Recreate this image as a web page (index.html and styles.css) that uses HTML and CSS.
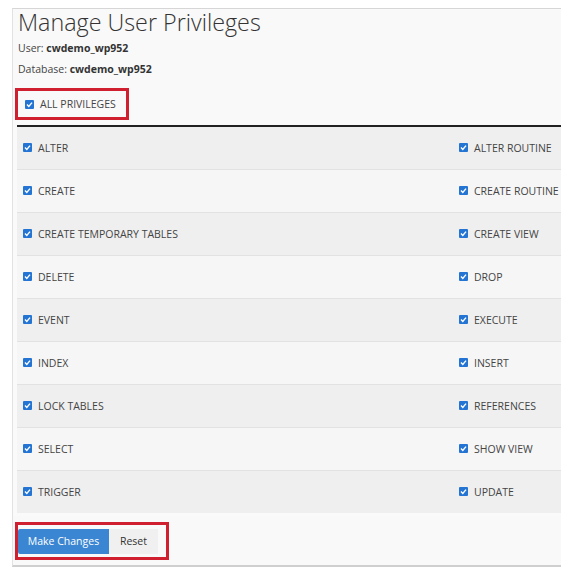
FILE: index.html
```html
<!DOCTYPE html>
<html>
<head>
<meta charset="utf-8">
<link rel="stylesheet" href="styles.css">
</head>
<body>
<div class="panel">
  <div class="head">
    <h1 class="title">Manage User Privileges</h1>
    <p class="meta">User: <b>cwdemo_wp952</b></p>
    <p class="meta">Database: <b>cwdemo_wp952</b></p>
    <div class="allbox">
      <span class="cb"><svg viewBox="0 0 9 9" width="9" height="9"><path d="M2 4.6 L3.8 6.4 L7 2.6" fill="none" stroke="#fff" stroke-width="1.4"/></svg></span>
      <span class="lbl">ALL PRIVILEGES</span>
    </div>
  </div>
  <div class="rows">
    <div class="row odd"><div class="cell"><span class="cb"><svg viewBox="0 0 9 9" width="9" height="9"><path d="M2 4.6 L3.8 6.4 L7 2.6" fill="none" stroke="#fff" stroke-width="1.4"/></svg></span>ALTER</div><div class="cell"><span class="cb"><svg viewBox="0 0 9 9" width="9" height="9"><path d="M2 4.6 L3.8 6.4 L7 2.6" fill="none" stroke="#fff" stroke-width="1.4"/></svg></span>ALTER ROUTINE</div></div>
    <div class="row even"><div class="cell"><span class="cb"><svg viewBox="0 0 9 9" width="9" height="9"><path d="M2 4.6 L3.8 6.4 L7 2.6" fill="none" stroke="#fff" stroke-width="1.4"/></svg></span>CREATE</div><div class="cell"><span class="cb"><svg viewBox="0 0 9 9" width="9" height="9"><path d="M2 4.6 L3.8 6.4 L7 2.6" fill="none" stroke="#fff" stroke-width="1.4"/></svg></span>CREATE ROUTINE</div></div>
    <div class="row odd"><div class="cell"><span class="cb"><svg viewBox="0 0 9 9" width="9" height="9"><path d="M2 4.6 L3.8 6.4 L7 2.6" fill="none" stroke="#fff" stroke-width="1.4"/></svg></span>CREATE TEMPORARY TABLES</div><div class="cell"><span class="cb"><svg viewBox="0 0 9 9" width="9" height="9"><path d="M2 4.6 L3.8 6.4 L7 2.6" fill="none" stroke="#fff" stroke-width="1.4"/></svg></span>CREATE VIEW</div></div>
    <div class="row even"><div class="cell"><span class="cb"><svg viewBox="0 0 9 9" width="9" height="9"><path d="M2 4.6 L3.8 6.4 L7 2.6" fill="none" stroke="#fff" stroke-width="1.4"/></svg></span>DELETE</div><div class="cell"><span class="cb"><svg viewBox="0 0 9 9" width="9" height="9"><path d="M2 4.6 L3.8 6.4 L7 2.6" fill="none" stroke="#fff" stroke-width="1.4"/></svg></span>DROP</div></div>
    <div class="row odd"><div class="cell"><span class="cb"><svg viewBox="0 0 9 9" width="9" height="9"><path d="M2 4.6 L3.8 6.4 L7 2.6" fill="none" stroke="#fff" stroke-width="1.4"/></svg></span>EVENT</div><div class="cell"><span class="cb"><svg viewBox="0 0 9 9" width="9" height="9"><path d="M2 4.6 L3.8 6.4 L7 2.6" fill="none" stroke="#fff" stroke-width="1.4"/></svg></span>EXECUTE</div></div>
    <div class="row even"><div class="cell"><span class="cb"><svg viewBox="0 0 9 9" width="9" height="9"><path d="M2 4.6 L3.8 6.4 L7 2.6" fill="none" stroke="#fff" stroke-width="1.4"/></svg></span>INDEX</div><div class="cell"><span class="cb"><svg viewBox="0 0 9 9" width="9" height="9"><path d="M2 4.6 L3.8 6.4 L7 2.6" fill="none" stroke="#fff" stroke-width="1.4"/></svg></span>INSERT</div></div>
    <div class="row odd"><div class="cell"><span class="cb"><svg viewBox="0 0 9 9" width="9" height="9"><path d="M2 4.6 L3.8 6.4 L7 2.6" fill="none" stroke="#fff" stroke-width="1.4"/></svg></span>LOCK TABLES</div><div class="cell"><span class="cb"><svg viewBox="0 0 9 9" width="9" height="9"><path d="M2 4.6 L3.8 6.4 L7 2.6" fill="none" stroke="#fff" stroke-width="1.4"/></svg></span>REFERENCES</div></div>
    <div class="row even"><div class="cell"><span class="cb"><svg viewBox="0 0 9 9" width="9" height="9"><path d="M2 4.6 L3.8 6.4 L7 2.6" fill="none" stroke="#fff" stroke-width="1.4"/></svg></span>SELECT</div><div class="cell"><span class="cb"><svg viewBox="0 0 9 9" width="9" height="9"><path d="M2 4.6 L3.8 6.4 L7 2.6" fill="none" stroke="#fff" stroke-width="1.4"/></svg></span>SHOW VIEW</div></div>
    <div class="row odd"><div class="cell"><span class="cb"><svg viewBox="0 0 9 9" width="9" height="9"><path d="M2 4.6 L3.8 6.4 L7 2.6" fill="none" stroke="#fff" stroke-width="1.4"/></svg></span>TRIGGER</div><div class="cell"><span class="cb"><svg viewBox="0 0 9 9" width="9" height="9"><path d="M2 4.6 L3.8 6.4 L7 2.6" fill="none" stroke="#fff" stroke-width="1.4"/></svg></span>UPDATE</div></div>
  </div>
  <div class="foot">
    <div class="btnbox">
      <button class="btn primary">Make Changes</button><button class="btn reset">Reset</button>
    </div>
  </div>
</div>
</body>
</html>
```

FILE: styles.css
```css
html, body {
  margin: 0;
  padding: 0;
  background: #ffffff;
  font-family: "Open Sans", "Liberation Sans", sans-serif;
  color: #333333;
}

.panel {
  margin: 8px 0 0 12px;
  width: 548px;
  background: #fafafa;
  border-top: 1px solid #d6d6d6;
  border-left: 1px solid #e2e2e2;
  border-bottom: 2px solid #cfcfcf;
  padding-top: 1px;
}

.head {
  padding-left: 5px;
  background: #f9f9f9;
}

.title {
  margin: 0;
  font-size: 23.3px;
  font-weight: 300;
  line-height: 24px;
  color: #333333;
}

.meta {
  margin: 4px 0 0 0;
  font-size: 10.5px;
  line-height: 21px;
  height: 21px;
  color: #444;
}

.meta + .meta {
  margin-top: 0;
}

.meta b {
  font-weight: 700;
  color: #333;
}

.allbox {
  display: inline-flex;
  align-items: center;
  box-sizing: border-box;
  height: 32px;
  width: 114px;
  margin: 8px 0 0 -3px;
  padding-left: 7px;
  border: 3px solid #d0202f;
  font-size: 10.5px;
  color: #444;
}

.cb {
  display: inline-flex;
  width: 9px;
  height: 9px;
  background: #2475d3;
  border-radius: 1px;
  margin-right: 6px;
  flex: none;
}

.cb svg {
  display: block;
}

.rows {
  margin: 5px 0 0 4px;
  border-top: 2px solid #222;
}

.row {
  display: grid;
  grid-template-columns: 436px 1fr;
  align-items: center;
  height: 41px;
  padding: 0 0 1px 6px;
  border-bottom: 1px solid #e2e2e2;
  font-size: 10.5px;
  color: #444;
}

.row:last-child {
  border-bottom: none;
}

.row.odd {
  background: #efefef;
}

.row.even {
  background: #f6f6f6;
}

.cell {
  display: flex;
  align-items: center;
  white-space: nowrap;
}

.foot {
  margin-top: 3px;
  padding: 6px 0 5px 2px;
  background: #f9f9f9;
}

.btnbox {
  display: inline-flex;
  align-items: center;
  box-sizing: border-box;
  width: 154px;
  height: 38px;
  border: 3px solid #d0202f;
  padding: 0;
}

.btn {
  font-family: "Open Sans", "Liberation Sans", sans-serif;
  font-size: 10.5px;
  height: 25px;
  border: none;
  margin: 0;
  padding: 0;
  cursor: pointer;
}

.btn.primary {
  width: 91px;
  background: #3a86d2;
  color: #ffffff;
  border-radius: 2px 0 0 2px;
}

.btn.reset {
  width: 49px;
  background: #f0f0f0;
  color: #333;
}
```
